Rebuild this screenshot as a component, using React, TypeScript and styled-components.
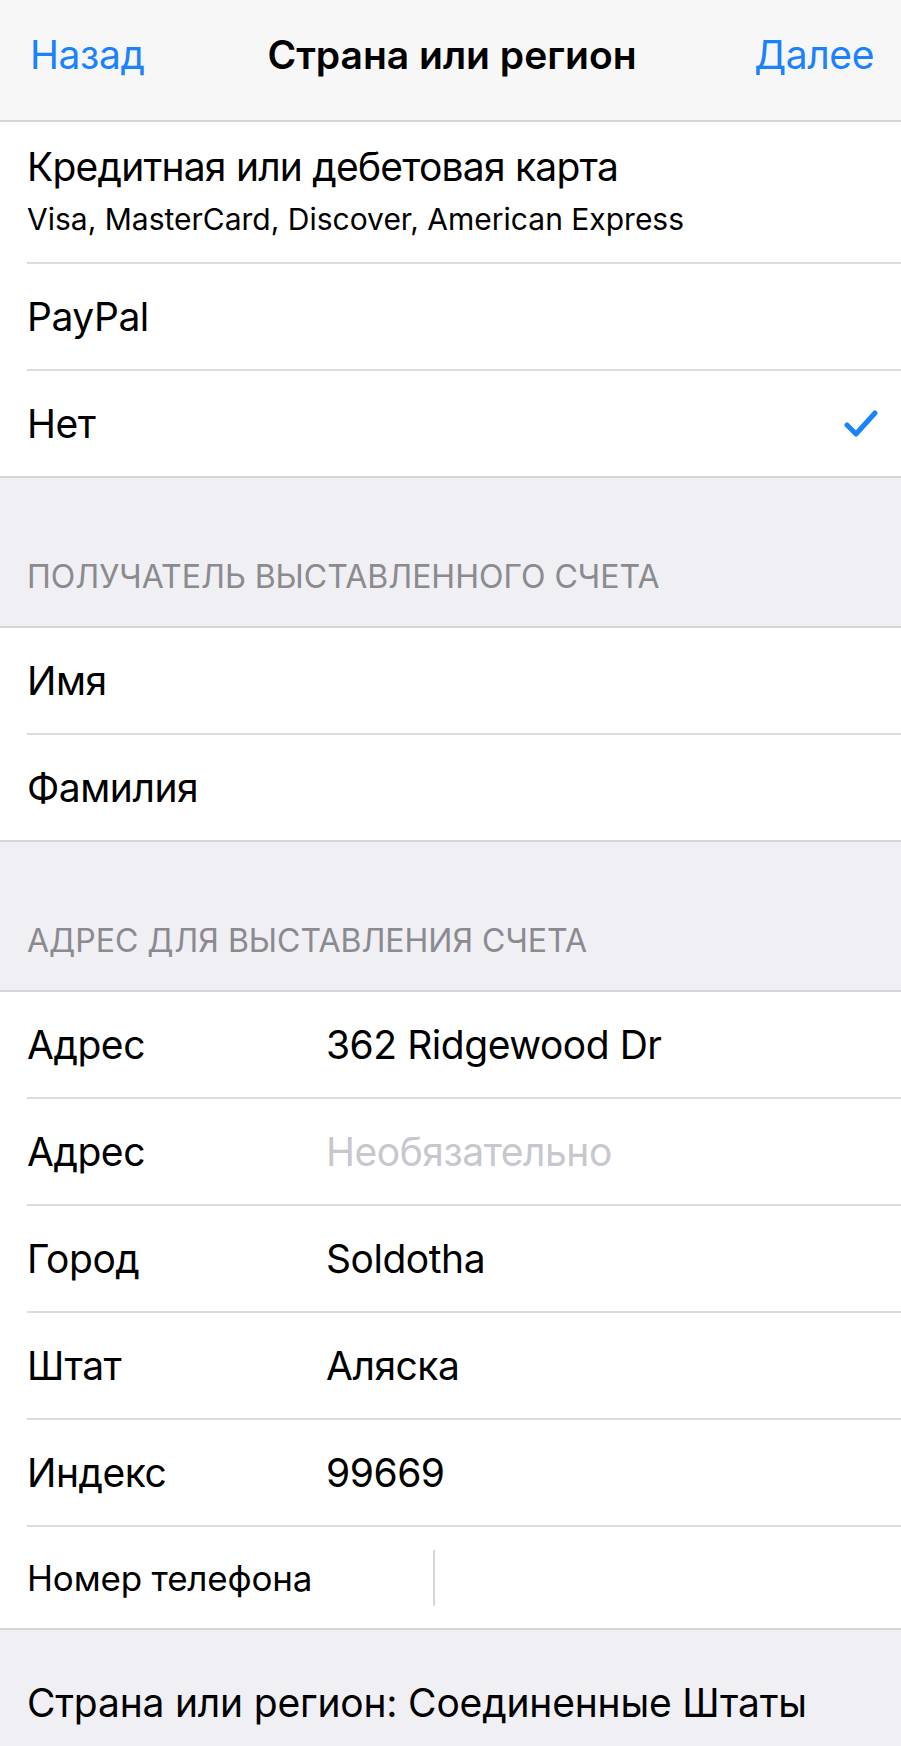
import styled, { createGlobalStyle } from 'styled-components';

const GlobalStyle = createGlobalStyle`
  html, body {
    margin: 0;
    padding: 0;
    background: #efeff4;
    font-family: Inter, "Noto Sans", "Liberation Sans", sans-serif;
    -webkit-font-smoothing: antialiased;
  }
`;

const Screen = styled.div`
  width: 901px;
  height: 1746px;
  overflow: hidden;
  background: #efeff4;
  color: #000;
`;

const NavBar = styled.header`
  height: 108px;
  padding: 0 27px 12px 30px;
  background: #f7f7f8;
  border-bottom: 2px solid #d6d6da;
  display: grid;
  grid-template-columns: 1fr auto 1fr;
  align-items: center;
`;

const NavButton = styled.span<{ $align?: 'left' | 'right' }>`
  color: #1a82fb;
  font-size: 39px;
  letter-spacing: -0.01em;
  text-align: ${({ $align }) => $align ?? 'left'};
`;

const NavTitle = styled.h1`
  margin: 0;
  font-size: 39px;
  font-weight: 600;
`;

const Group = styled.section`
  background: #fff;
  border-bottom: 2px solid #d6d6da;
`;

// row heights exclude the 2px separator
const Row = styled.div<{ $tall?: boolean; $short?: boolean }>`
  margin-left: 27px;
  padding-right: 23px;
  height: ${({ $tall, $short }) => ($tall ? 140 : $short ? 101 : 105)}px;
  border-bottom: 2px solid #dcdce0;
  display: flex;
  align-items: center;
  font-size: 39px;
  letter-spacing: -0.012em;

  &:last-child {
    border-bottom: none;
  }
`;

const Stack = styled.div`
  display: flex;
  flex-direction: column;
  gap: 11px;
  margin-top: -4px;
`;

const Title = styled.span`
  font-size: 39px;
  line-height: 47px;
  letter-spacing: -0.02em;
`;

const Subtitle = styled.span`
  font-size: 30px;
  line-height: 36px;
  letter-spacing: 0;
`;

const Label = styled.span`
  width: 299px;
  flex-shrink: 0;
`;

const PhoneLabel = styled.span`
  width: 406px;
  flex-shrink: 0;
  font-size: 35px;
  letter-spacing: -0.005em;
`;

const Value = styled.span<{ $placeholder?: boolean }>`
  color: ${({ $placeholder }) => ($placeholder ? '#c7c7cd' : '#000')};
`;

const Divider = styled.span`
  width: 2px;
  height: 56px;
  background: #d6d6da;
`;

const Check = styled.svg`
  margin-left: auto;
  width: 34px;
  height: 28px;
`;

const SectionHeader = styled.div`
  height: 150px;
  padding: 0 27px 30px;
  box-sizing: border-box;
  border-bottom: 2px solid #d6d6da;
  display: flex;
  align-items: flex-end;
  color: #8a8a8f;
  font-size: 32px;
  line-height: 39px;
  text-transform: uppercase;
`;

const Footer = styled.div`
  padding: 49px 27px 0;
  font-size: 39px;
  line-height: 47px;
  letter-spacing: -0.005em;
`;

const addressFields: { label: string; value: string; placeholder?: boolean }[] = [
  { label: 'Адрес', value: '362 Ridgewood Dr' },
  { label: 'Адрес', value: 'Необязательно', placeholder: true },
  { label: 'Город', value: 'Soldotha' },
  { label: 'Штат', value: 'Аляска' },
  { label: 'Индекс', value: '99669' },
];

export default function App() {
  return (
    <Screen>
      <GlobalStyle />
      <NavBar>
        <NavButton>Назад</NavButton>
        <NavTitle>Страна или регион</NavTitle>
        <NavButton $align="right">Далее</NavButton>
      </NavBar>

      <Group>
        <Row $tall>
          <Stack>
            <Title>Кредитная или дебетовая карта</Title>
            <Subtitle>Visa, MasterCard, Discover, American Express</Subtitle>
          </Stack>
        </Row>
        <Row>PayPal</Row>
        <Row>
          Нет
          <Check viewBox="0 0 34 28" fill="none">
            <polyline
              points="3,15 12,24 31,3"
              stroke="#1a82fb"
              strokeWidth="5"
              strokeLinecap="round"
              strokeLinejoin="round"
            />
          </Check>
        </Row>
      </Group>

      <SectionHeader>Получатель выставленного счета</SectionHeader>
      <Group>
        <Row>Имя</Row>
        <Row>Фамилия</Row>
      </Group>

      <SectionHeader>Адрес для выставления счета</SectionHeader>
      <Group>
        {addressFields.map((f, i) => (
          <Row key={i}>
            <Label>{f.label}</Label>
            <Value $placeholder={f.placeholder}>{f.value}</Value>
          </Row>
        ))}
        <Row $short>
          <PhoneLabel>Номер телефона</PhoneLabel>
          <Divider />
        </Row>
      </Group>

      <Footer>Страна или регион: Соединенные Штаты</Footer>
    </Screen>
  );
}
